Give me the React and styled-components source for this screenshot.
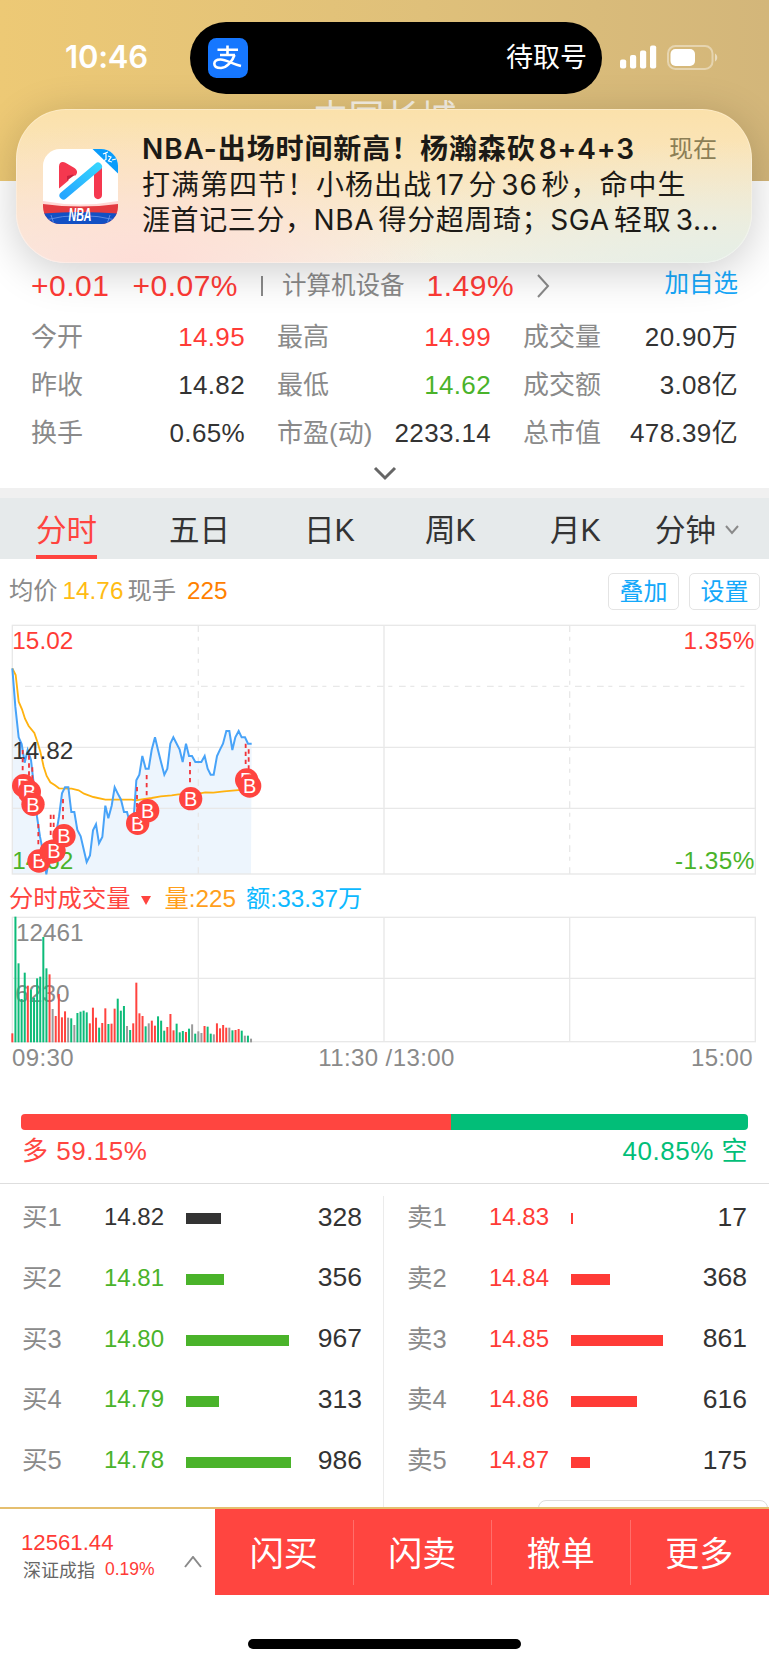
import styled, { createGlobalStyle, css } from 'styled-components';


const GlobalStyle = createGlobalStyle`
	* {
		box-sizing: border-box;
	}
	body {
		margin: 0;
		background-color: #FFFFFF;
		font-family: 'Liberation Sans', 'Noto Sans CJK SC', sans-serif;
		line-height: 1.2;
		color: #333333;
	}
`;

const RED = '#FF3B36';
const GREEN = '#4AB32A';

const Screen = styled.div`
	position: relative;
	width: 769px;
	height: 1665px;
	overflow: hidden;
	display: flex;
	flex-direction: column;
	white-space: nowrap;
`;

const Header = styled.header`
	flex: none;
	height: 181px;
	background: linear-gradient(90deg, #EDC975 0%, #DFC07A 55%, #D3B67A 100%);
	overflow: hidden;
`;

const StatusBar = styled.div`
	display: flex;
	align-items: center;
	height: 72px;
	margin-top: 22px;
	color: #FFFFFF;
`;

const Clock = styled.span`
	width: 190px;
	padding-left: 65px;
	padding-bottom: 2px;
	font-family: 'Inter', sans-serif;
	font-size: 31px;
	font-weight: 600;
	letter-spacing: -0.2px;
`;

const Island = styled.div`
	display: flex;
	align-items: center;
	justify-content: space-between;
	width: 412px;
	height: 72px;
	padding: 0 15px 0 18px;
	border-radius: 36px;
	background-color: #000000;
	font-size: 27px;
`;

const StatusIcons = styled.div`
	display: flex;
	align-items: center;
	gap: 10px;
	margin-left: 18px;
	padding-bottom: 2px;
`;

const StockName = styled.h1`
	margin: 3px 0 0;
	text-align: center;
	font-size: 36px;
	line-height: 44px;
	font-weight: 400;
	color: #F7F1E4;
`;

const Notice = styled.section`
	position: absolute;
	left: 16px;
	top: 109px;
	display: flex;
	width: 736px;
	height: 154px;
	padding: 40px 0 0 27px;
	border-radius: 50px;
	background:
		radial-gradient(ellipse 300px 150px at 17% 105%, rgba(255, 220, 214, 0.95) 0, rgba(255, 224, 208, 0) 100%),
		radial-gradient(ellipse 420px 130px at 100% 105%, rgba(228, 238, 230, 1) 0, rgba(240, 238, 220, 0) 100%),
		linear-gradient(180deg, #FBE1AB 0%, #FAE6C0 45%, #F6F1E4 100%);
	box-shadow: 0 8px 44px rgba(0, 0, 0, 0.2), inset 0 0 0 1px rgba(255, 255, 255, 0.3);
`;

const NoticeBody = styled.div`
	width: 575px;
	margin: -18px 0 0 24px;
	color: #1C1A16;
	font-family: 'Inter', 'Noto Sans CJK SC', sans-serif;
`;

const NoticeHead = styled.div`
	display: flex;
	justify-content: space-between;
	align-items: center;
	height: 37px;
`;

const NoticeTitle = styled.span`
	font-size: 28px;
	font-weight: 600;
	letter-spacing: 0.9px;
	word-spacing: -5px;
`;

const NoticeTime = styled.span`
	font-size: 24px;
	color: #8C7E55;
`;

const NoticeLine = styled.p`
	height: 35px;
	margin: 0;
	line-height: 35px;
	font-size: 28px;
	letter-spacing: ${props => props.$spacing || 0}px;
	word-spacing: ${props => props.$words || 0}px;
`;

const Quote = styled.div`
	flex: none;
	display: flex;
	align-items: center;
	height: 50px;
	margin-top: 80px;
	padding: 0 31px 0 31px;
	color: ${RED};
	font-size: 30px;
	letter-spacing: 0.5px;
`;

const Change = styled.span`
	margin-right: ${props => props.$gap}px;
`;

const Divider = styled.i`
	width: 2px;
	height: 20px;
	margin-right: 19px;
	background-color: #8A8A8A;
`;

const Sector = styled.span`
	margin-right: 22px;
	color: #8A8A8A;
	font-size: 24.5px;
	letter-spacing: 0;
`;

const Follow = styled.span`
	margin-left: auto;
	margin-top: -4px;
	color: #16A8FA;
	font-size: 24.5px;
	letter-spacing: 0;
`;

const Stats = styled.div`
	flex: none;
	display: grid;
	grid-template-columns: 214px 214px 215px;
	column-gap: 32px;
	grid-auto-rows: 48px;
	padding: 3px 0 0 31px;
`;

const Stat = styled.div`
	display: flex;
	align-items: center;
	justify-content: space-between;
	font-size: 26px;
`;

const Label = styled.span`
	color: #8A8A8A;
`;

const Value = styled.span`
	color: ${props => props.$color || '#333333'};
	letter-spacing: 0.35px;
`;

const More = styled.div`
	flex: none;
	display: flex;
	justify-content: center;
	align-items: center;
	height: 30px;
	padding-top: 1px;
`;

const Tabs = styled.nav`
	flex: none;
	display: grid;
	grid-template-columns: 133px 135px 121px 125px 105px 1fr;
	height: 71px;
	padding-left: 36px;
	border-top: 10px solid #F0F0F0;
	background-color: #E6EAEB;
`;

const Tab = styled.span`
	justify-self: start;
	display: flex;
	align-items: center;
	gap: 9px;
	height: 61px;
	padding-top: 3px;
	font-size: 30.5px;
	${props => props.$active && css`
		color: #FF443F;
		border-bottom: 4px solid #FF443F;
		padding-top: 7px;
	`}
`;

const InfoRow = styled.div`
	flex: none;
	display: flex;
	align-items: center;
	height: 61px;
	padding: 3px 9px 0 9px;
	font-size: 24.3px;
`;

const Info = styled.span`
	margin-right: ${props => props.$gap || 0}px;
	color: ${props => props.$color};
`;

const Spacer = styled.div`
	flex: 1;
`;

const ChartButton = styled.button`
	width: 71px;
	height: 37px;
	margin-left: 10px;
	padding: 0;
	border: 1px solid #E4E4E4;
	border-radius: 5px;
	background-color: #FFFFFF;
	color: #14A8FA;
	font-family: inherit;
	font-size: 24px;
	line-height: 36px;
`;

const Chart = styled.svg`
	flex: none;
	display: block;
	width: 769px;
	height: ${props => props.$height}px;
	font-family: 'Liberation Sans', sans-serif;
	font-size: 73px;
`;

const VolumeRow = styled.div`
	flex: none;
	display: flex;
	align-items: center;
	height: 30px;
	margin-top: 4px;
	padding-left: 9px;
	font-size: 24.3px;
`;

const Triangle = styled.i`
	margin: 3px 13px 0 11px;
	border-left: 5px solid transparent;
	border-right: 5px solid transparent;
	border-top: 9px solid #FF443F;
`;

const TimeAxis = styled.div`
	flex: none;
	display: grid;
	grid-template-columns: 1fr auto 1fr;
	height: 30px;
	line-height: 30px;
	padding: 0 16px 0 12px;
	color: #8A8A8A;
	font-size: 24px;
	letter-spacing: 0.4px;
`;

const TimeMark = styled.span`
	text-align: ${props => props.$align || 'left'};
	padding-left: ${props => props.$shift || 0}px;
`;

const Ratio = styled.div`
	flex: none;
	display: flex;
	height: 16px;
	margin: 41px 21px 0;
	border-radius: 4px;
	overflow: hidden;
`;

const RatioPart = styled.div`
	background-color: ${props => props.$color};
`;

const RatioLegend = styled.div`
	flex: none;
	display: flex;
	justify-content: space-between;
	height: 54px;
	padding: 0 21px 0 22px;
	line-height: 42px;
	font-size: 26px;
	letter-spacing: 0.5px;
	border-bottom: 1px solid #DEDEDE;
`;

const OrderBook = styled.div`
	flex: none;
	display: grid;
	grid-template-columns: 383px 386px;
	height: 323px;
	padding-top: 12px;
`;

const Side = styled.div`
	display: flex;
	flex-direction: column;
	padding: ${props => props.$sell ? '0 22px 0 23px' : '0 21px 0 22px'};
	border-left: ${props => props.$sell ? '1px solid #EBEBEB' : '0'};
`;

const Order = styled.div`
	display: grid;
	grid-template-columns: 82px 82px 1fr auto;
	align-items: center;
	height: 60.8px;
	margin-top: ${props => props.$first ? -9 : 0}px;
`;

const OrderLabel = styled.span`
	color: #8A8A8A;
	font-size: 25.5px;
`;

const OrderPrice = styled.span`
	color: ${props => props.$color};
	font-size: 24px;
`;

const DepthBar = styled.i`
	height: 11px;
	margin-top: 3px;
	background-color: ${props => props.$color};
`;

const Amount = styled.span`
	font-size: 26.5px;
`;

// top edge of the index popover that hides behind the bottom bar
const Drawer = styled.div`
	position: absolute;
	left: 538px;
	top: 1500px;
	width: 230px;
	height: 20px;
	border: 1px solid #DDDDDD;
	border-radius: 8px;
	background-color: #FFFFFF;
`;

const BottomBar = styled.footer`
	position: relative;
	flex: none;
	display: flex;
	height: 89px;
	border-top: 2px solid #E5BF6F;
	background-color: #FFFFFF;
`;

const IndexBox = styled.div`
	display: flex;
	align-items: center;
	width: 215px;
	padding-left: 21px;
`;

const IndexText = styled.div`
	width: 163px;
	padding-top: 8px;
`;

const IndexValue = styled.div`
	color: ${RED};
	font-size: 22.2px;
	line-height: 28px;
`;

const IndexName = styled.div`
	display: flex;
	gap: 10px;
	padding-left: 2px;
	color: #666666;
	font-size: 18px;
	line-height: 28px;
`;

const IndexChange = styled.span`
	color: ${RED};
	font-size: 17.5px;
	line-height: 24px;
`;

const IndexToggle = styled.span`
	padding-top: 20px;
`;

const Actions = styled.div`
	flex: 1;
	display: grid;
	grid-template-columns: repeat(4, 1fr);
	align-items: center;
	height: 86px;
	background-color: #FF4540;
`;

const Action = styled.button`
	height: 65px;
	padding: 0 0 1px;
	border: 0;
	border-right: 1px solid ${props => props.$last ? 'transparent' : '#FF6F6B'};
	background: none;
	color: #FFFFFF;
	font-family: inherit;
	font-size: 34px;
`;

const HomeIndicator = styled.div`
	flex: none;
	width: 273px;
	height: 10px;
	margin: 43px auto 0;
	border-radius: 5px;
	background-color: #000000;
`;


const stats = [
	['今开', '14.95', RED], ['最高', '14.99', RED], ['成交量', '20.90万'],
	['昨收', '14.82'], ['最低', '14.62', GREEN], ['成交额', '3.08亿'],
	['换手', '0.65%'], ['市盈(动)', '2233.14'], ['总市值', '478.39亿'],
];

const tabs = ['分时', '五日', '日K', '周K', '月K', '分钟'];

const buys = [
	['买1', '14.82', 328, '#333333'],
	['买2', '14.81', 356, GREEN],
	['买3', '14.80', 967, GREEN],
	['买4', '14.79', 313, GREEN],
	['买5', '14.78', 986, GREEN],
];

const sells = [
	['卖1', '14.83', 17, RED],
	['卖2', '14.84', 368, RED],
	['卖3', '14.85', 861, RED],
	['卖4', '14.86', 616, RED],
	['卖5', '14.87', 175, RED],
];

// both charts use three units per pixel
const price = '37,325 46,440 56,532 65,552 74,608 83,570 93,600 102,680 111,770 120,830 130,880 139,943 149,890 158,870 167,830 177,770 186,700 195,682 205,682 214,756 223,756 232,810 242,829 251,868 260,906 270,886 279,811 288,793 297,850 307,831 316,737 325,775 335,737 344,682 353,700 363,719 372,756 381,756 390,790 400,790 409,661 418,644 427,588 437,626 446,626 455,570 465,532 474,570 483,606 493,644 502,626 511,551 520,532 530,551 539,569 548,606 558,551 567,588 576,588 586,606 604,606 614,588 623,626 632,644 641,644 651,588 660,569 669,551 679,513 688,513 697,570 706,532 716,513 725,532 735,532 744,551 755,551';

const average = '37,325 47,345 56,425 66,448 75,476 86,498 103,519 112,545 121,575 131,620 140,648 151,667 165,676 177,685 215,686 236,691 252,701 280,711 316,719 395,719 409,721 425,718 455,714 482,709 515,706 535,703 600,700 616,697 640,698 672,694 706,691 740,688';

const trades = [
	[71, 677], [88, 696], [99, 733], [117, 903], [153, 876], [162, 873],
	[192, 827], [413, 790], [443, 752], [572, 716], [740, 660], [749, 678],
];

const stems = [
	[68, 570, 632], [87, 586, 648], [97, 622, 684], [115, 792, 856], [152, 764, 828], [161, 764, 828],
	[189, 717, 780], [411, 681, 745], [440, 645, 708], [570, 606, 670], [737, 551, 614], [746, 568, 630],
];

const volumeColors = { r: '#FF443F', g: '#0DBB79', n: '#9A9A9A' };
const volumeKinds = 'rgggg' + 'rgggg' + 'ggrnr' + 'rrrng' + 'ngggg' + 'rrrgr' + 'rgrrg' + 'ggngr' + 'rrrgn' + 'rrggg' + 'rrrgg' + 'grgng' + 'nnrgg' + 'nrrrr' + 'ngrrg' + 'ngn';
const volumes = [
	27, 377, 237, 130, 209, 170, 159, 134, 192, 197, 316, 222, 204, 100, 79, 145, 75, 93, 74, 72,
	52, 88, 92, 95, 90, 57, 104, 74, 44, 58, 102, 55, 56, 101, 131, 95, 109, 49, 37, 57,
	179, 87, 79, 48, 57, 65, 50, 78, 65, 35, 46, 85, 36, 56, 30, 34, 31, 41, 54, 26,
	33, 28, 49, 47, 26, 24, 57, 42, 52, 44, 44, 36, 37, 40, 35, 20, 20, 11,
];

const AlipayIcon = () => (
	<svg width="40" height="40" viewBox="0 0 40 40">
		<rect width="40" height="40" rx="8.5" fill="#1677FF" />
		<g fill="none" stroke="#FFFFFF" strokeWidth="2.6">
			<path d="M9.5 11.8h20.500M19.500 7.500v9.500M12 17h15" />
			<path d="M26.500 17c-2 6-7.500 12.500-13.500 13-4 0-6.700-1.500-6.700-4.200 0-3 3-4.300 6.200-4.300 6 0 11.500 4.500 20.500 6.500" />
		</g>
	</svg>
);

const AppIcon = () => (
	<svg width="75" height="75" viewBox="0 0 75 75">
		<defs>
			<clipPath id="appShape"><rect width="75" height="75" rx="17" /></clipPath>
			<linearGradient id="slash" x1="0" y1="1" x2="1" y2="0">
				<stop offset="0" stopColor="#25A6FF" />
				<stop offset="1" stopColor="#35D3FF" />
			</linearGradient>
		</defs>
		<g clipPath="url(#appShape)">
			<rect width="75" height="75" fill="#FFFFFF" />
			<path d="M49.500 0h26v25z" fill="#0A9CFB" />
			<g fill="none" stroke="#FFFFFF" strokeWidth="1.200">
				<path d="M60 5l5-2M63 3.500v7l-3 1.500M65 7l3 1-2.500 4 3.500 1M69 11l4-1" />
			</g>
			<path d="M16 39.500V17.500c0-4.500 3.500-5.500 6.500-3.800L31.500 19c3.500 2.500 3 5.500 1 7.500l-7 .5v4.500z" fill="#F5384F" />
			<path d="M24 31.500v-4.500l6-1.500 1 1z" fill="#C9233F" />
			<path d="M51 25l8-7v28c0 5.500-8 5.500-8 0z" fill="#F5384F" />
			<path d="M20.500 46.500L55 17.500" stroke="url(#slash)" strokeWidth="8" strokeLinecap="round" />
			<path d="M0 52q37 7 75 0v23H0z" fill="#FFD9D6" />
			<path d="M0 55q37 5 75 0v20H0z" fill="#E33B41" />
			<path d="M0 64.500q37-3 75 0V75H0z" fill="#1250C4" />
			<path d="M2 71q35-9 71 0M11 75l-3-9M64 75l3-9" fill="none" stroke="#6E97E8" strokeWidth="0.800" />
			<text x="37" y="72" textAnchor="middle" fill="#FFFFFF" fontFamily="Liberation Sans" fontSize="18" fontWeight="700" fontStyle="italic" textLength="23" lengthAdjust="spacingAndGlyphs">NBA</text>
		</g>
	</svg>
);

const SignalIcon = () => (
	<svg width="37" height="24" viewBox="0 0 37 24" fill="#FFFFFF">
		<rect x="0" y="14.500" width="6.200" height="9" rx="2" />
		<rect x="10" y="10" width="6.200" height="13.500" rx="2" />
		<rect x="20" y="5.500" width="6.200" height="18" rx="2" />
		<rect x="30" y="0.500" width="6.200" height="23" rx="2" />
	</svg>
);

const BatteryIcon = () => (
	<svg width="51" height="25" viewBox="0 0 51 25">
		<rect x="1" y="1" width="44.500" height="23" rx="7.500" fill="none" stroke="#FFFFFF" strokeOpacity="0.400" strokeWidth="2" />
		<rect x="3.500" y="4" width="24.500" height="17" rx="5" fill="#FFFFFF" />
		<path d="M48 8.500c3 1.500 3 6.500 0 8z" fill="#FFFFFF" fillOpacity="0.500" />
	</svg>
);

const Chevron = ({ width, height, points, color, stroke = 2 }) => (
	<svg width={width} height={height} viewBox={`0 0 ${width} ${height}`}>
		<polyline points={points} fill="none" stroke={color} strokeWidth={stroke} />
	</svg>
);

const PriceChart = () => (
	<Chart $height={260} viewBox="0 180 2307 780">
		<polygon points={`37,942 ${price} 753,942`} fill="#EDF5FD" />
		<g fill="none" stroke="#E8E8E8" strokeWidth="4">
			<rect x="37" y="196" width="2229" height="746" />
			<path d="M1152 196V942M37 562H2266M37 745H2266" />
			<path d="M595 196V942M1709 196V942M75 379H2250" strokeDasharray="20 14 12 20" />
		</g>
		<polyline points={average} fill="none" stroke="#FFB20F" strokeWidth="5.500" />
		<polyline points={price} fill="none" stroke="#48A3F8" strokeWidth="6" />
		<text x="37" y="268" fill={RED}>15.02</text>
		<text x="37" y="598" fill="#333333">14.82</text>
		<text x="37" y="928" fill={GREEN}>14.62</text>
		<text x="2265" y="268" fill={RED} textAnchor="end" letterSpacing="1.500">1.35%</text>
		<text x="2265" y="928" fill={GREEN} textAnchor="end" letterSpacing="1.500">-1.35%</text>
		{stems.map(([x, y1, y2]) => (
			<path key={x} d={`M${x} ${y1}V${y2}`} stroke="#F0343A" strokeWidth="5.500" strokeDasharray="13 11" />
		))}
		{trades.map(([x, y]) => (
			<g key={x}>
				<circle cx={x} cy={y} r="35" fill="#FF443F" />
				<text x={x} y={y + 22} fill="#FFFFFF" fontSize="60" textAnchor="middle">B</text>
			</g>
		))}
	</Chart>
);

const VolumeChart = () => (
	<Chart $height={129} viewBox="0 102 2307 387">
		<g fill="none" stroke="#E8E8E8" strokeWidth="4">
			<rect x="37" y="112" width="2229" height="373" />
			<path d="M37 295H2266M595 112V485M1152 112V485M1709 112V485" />
		</g>
		<text x="48" y="182" fill="#8A8A8A">12461</text>
		<text x="46" y="366" fill="#8A8A8A">6230</text>
		{volumes.map((h, i) => (
			<rect key={i} x={34 + i * 9.3} y={487 - h} width="6" height={h} fill={volumeColors[volumeKinds[i]]} />
		))}
	</Chart>
);

const OrderSide = ({ rows, sell }) => (
	<Side $sell={sell}>
		{rows.map(([label, cost, amount, color], i) => (
			<Order key={label} $first={i === 0}>
				<OrderLabel>{label}</OrderLabel>
				<OrderPrice $color={color}>{cost}</OrderPrice>
				<DepthBar $color={color} style={{ width: Math.max(2, amount * 0.1067) }} />
				<Amount>{amount}</Amount>
			</Order>
		))}
	</Side>
);


const App = () => {
	return (
		<Screen>
			<GlobalStyle />
			<Header>
				<StatusBar>
					<Clock>10:46</Clock>
					<Island>
						<AlipayIcon />
						<span>待取号</span>
					</Island>
					<StatusIcons>
						<SignalIcon />
						<BatteryIcon />
					</StatusIcons>
				</StatusBar>
				<StockName>中国长城</StockName>
			</Header>
			<Notice>
				<AppIcon />
				<NoticeBody>
					<NoticeHead>
						<NoticeTitle>NBA-出场时间新高！杨瀚森砍 8+4+3</NoticeTitle>
						<NoticeTime>现在</NoticeTime>
					</NoticeHead>
					<NoticeLine $spacing={1} $words={-5.2}>打满第四节！小杨出战 17 分 36 秒，命中生</NoticeLine>
					<NoticeLine $spacing={0.6} $words={-4}>涯首记三分，NBA 得分超周琦；SGA 轻取 3...</NoticeLine>
				</NoticeBody>
			</Notice>
			<Quote>
				<Change $gap={23}>+0.01</Change>
				<Change $gap={23}>+0.07%</Change>
				<Divider />
				<Sector>计算机设备</Sector>
				<Change $gap={22}>1.49%</Change>
				<Chevron width={14} height={24} points="2,1 12,12 2,23" color="#8A8A8A" />
				<Follow>加自选</Follow>
			</Quote>
			<Stats>
				{stats.map(([label, value, color]) => (
					<Stat key={label}>
						<Label>{label}</Label>
						<Value $color={color}>{value}</Value>
					</Stat>
				))}
			</Stats>
			<More>
				<Chevron width={24} height={16} points="2,2 12,12 22,2" color="#666666" stroke={3} />
			</More>
			<Tabs>
				{tabs.map((tab, i) => (
					<Tab key={tab} $active={i === 0}>
						{tab}
						{tab === '分钟' && <Chevron width={14} height={10} points="1,1 7,8 13,1" color="#8A8A8A" />}
					</Tab>
				))}
			</Tabs>
			<InfoRow>
				<Info $color="#8A8A8A" $gap={5}>均价</Info>
				<Info $color="#FFBC14" $gap={4}>14.76</Info>
				<Info $color="#8A8A8A" $gap={11}>现手</Info>
				<Info $color="#FF8000">225</Info>
				<Spacer />
				<ChartButton>叠加</ChartButton>
				<ChartButton>设置</ChartButton>
			</InfoRow>
			<PriceChart />
			<VolumeRow>
				<Info $color="#FF443F">分时成交量</Info>
				<Triangle />
				<Info $color="#FF9F1C" $gap={10}>量:225</Info>
				<Info $color="#0DB9FF">额:33.37万</Info>
			</VolumeRow>
			<VolumeChart />
			<TimeAxis>
				<TimeMark>09:30</TimeMark>
				<TimeMark $shift={8}>11:30 /13:00</TimeMark>
				<TimeMark $align="right">15:00</TimeMark>
			</TimeAxis>
			<Ratio>
				<RatioPart $color="#FF4540" style={{ width: '59.15%' }} />
				<RatioPart $color="#02BE78" style={{ width: '40.85%' }} />
			</Ratio>
			<RatioLegend>
				<Info $color="#FF4540">多 59.15%</Info>
				<Info $color="#02BE78">40.85% 空</Info>
			</RatioLegend>
			<OrderBook>
				<OrderSide rows={buys} />
				<OrderSide rows={sells} sell />
			</OrderBook>
			<Drawer />
			<BottomBar>
				<IndexBox>
					<IndexText>
						<IndexValue>12561.44</IndexValue>
						<IndexName>深证成指<IndexChange>0.19%</IndexChange></IndexName>
					</IndexText>
					<IndexToggle>
						<Chevron width={18} height={12} points="1,11 9,1 17,11" color="#8A8A8A" />
					</IndexToggle>
				</IndexBox>
				<Actions>
					<Action>闪买</Action>
					<Action>闪卖</Action>
					<Action>撤单</Action>
					<Action $last>更多</Action>
				</Actions>
			</BottomBar>
			<HomeIndicator />
		</Screen>
	)
}


export default App;
